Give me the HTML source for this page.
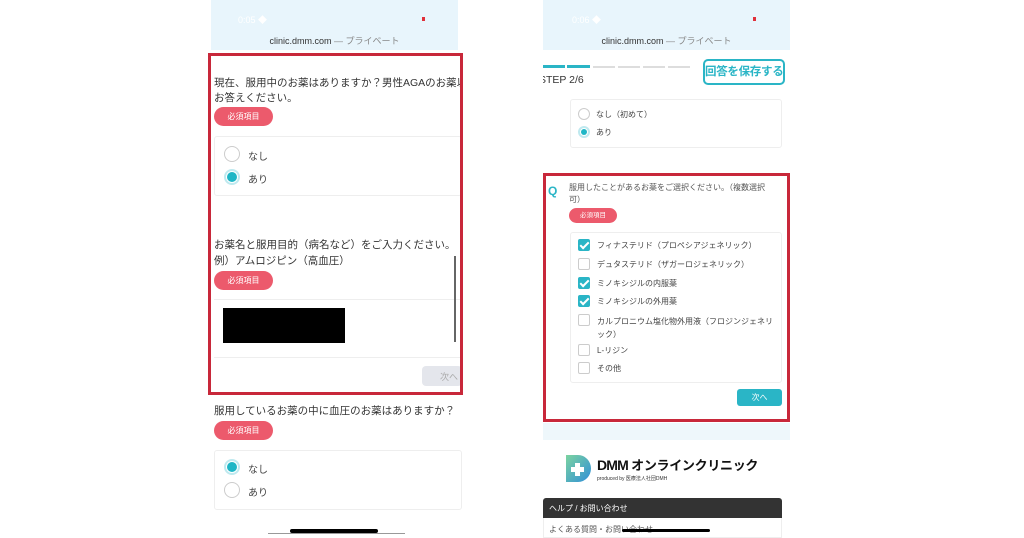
<!DOCTYPE html>
<html><head><meta charset="utf-8"><style>
*{margin:0;padding:0;box-sizing:border-box}
body{width:1024px;height:538px;background:#fff;position:relative;overflow:hidden;font-family:"Liberation Sans","Noto Sans CJK JP",sans-serif;color:#444}
.a{position:absolute}
.pill{position:absolute;background:#ec5a6c;color:#fff;border-radius:10px;text-align:center}
.rad{position:absolute;border:1px solid #ccc;border-radius:50%;background:#fff}
.rad.on{border:2px solid #bfe9ef}
.rad.on::after{content:"";position:absolute;left:1px;top:1px;right:1px;bottom:1px;border-radius:50%;background:#1fb6c6}
.box{position:absolute;border:1px solid #eee;border-radius:3px;background:#fff}
.cb{position:absolute;width:12px;height:12px;border:1px solid #ccc;border-radius:2px;background:#fff}
.cb.on{background:#2ab5c6;border-color:#2ab5c6}
.cb.on::after{content:"";position:absolute;left:3px;top:0px;width:3px;height:7px;border:solid #fff;border-width:0 2px 2px 0;transform:rotate(45deg)}
.t{position:absolute;white-space:nowrap}
</style></head><body>
<!-- LEFT PHONE -->
<div class="a" style="left:211px;top:0;width:247px;height:50px;background:#e8f5fc"></div>
<div class="t" style="left:211px;width:247px;text-align:center;top:34px;font-size:9px;color:#333">clinic.dmm.com <span style="color:#888">— プライベート</span></div>
<div class="t" style="left:238px;top:13px;font-size:9px;color:#fff">0:05 ◆</div>
<div class="a" style="left:422px;top:17px;width:3px;height:4px;background:#e0303a"></div>

<div class="a" style="left:214px;top:76px;width:246px;height:32px;overflow:hidden"><div class="t" style="left:0;top:0;font-size:10.5px;line-height:15px;color:#333">現在、服用中のお薬はありますか？男性AGAのお薬以外<br>お答えください。</div></div>
<div class="pill" style="left:214px;top:107px;width:59px;height:19px;font-size:8px;line-height:19px">必須項目</div>
<div class="box" style="left:214px;top:136px;width:248px;height:60px"></div>
<div class="rad" style="left:224px;top:146px;width:16px;height:16px"></div>
<div class="t" style="left:248px;top:148px;font-size:10px">なし</div>
<div class="rad on" style="left:224px;top:169px;width:16px;height:16px"></div>
<div class="t" style="left:248px;top:171px;font-size:10px">あり</div>

<div class="t" style="left:214px;top:238px;font-size:10.5px;line-height:15.5px;color:#333">お薬名と服用目的（病名など）をご入力ください。<br>例）アムロジピン（高血圧）</div>
<div class="pill" style="left:214px;top:271px;width:59px;height:19px;font-size:8px;line-height:19px">必須項目</div>
<div class="a" style="left:214px;top:299px;width:248px;height:1px;background:#eee"></div>
<div class="a" style="left:223px;top:308px;width:122px;height:35px;background:#000"></div>
<div class="a" style="left:214px;top:357px;width:248px;height:1px;background:#eee"></div>
<div class="a" style="left:422px;top:366px;width:40px;height:20px;background:#e4e6ec;border-radius:4px"></div>
<div class="t" style="left:440px;top:370px;font-size:9px;color:#aaa">次へ</div>
<div class="a" style="left:454px;top:256px;width:2px;height:86px;background:#666"></div>
<div class="a" style="left:208px;top:53px;width:255px;height:342px;border:3px solid #c8283a"></div>

<div class="t" style="left:214px;top:403px;font-size:10.5px;color:#333">服用しているお薬の中に血圧のお薬はありますか？</div>
<div class="pill" style="left:214px;top:421px;width:59px;height:19px;font-size:8px;line-height:19px">必須項目</div>
<div class="box" style="left:214px;top:450px;width:248px;height:60px"></div>
<div class="rad on" style="left:224px;top:459px;width:16px;height:16px"></div>
<div class="t" style="left:248px;top:461px;font-size:10px">なし</div>
<div class="rad" style="left:224px;top:482px;width:16px;height:16px"></div>
<div class="t" style="left:248px;top:484px;font-size:10px">あり</div>
<div class="a" style="left:268px;top:533px;width:137px;height:1px;background:#999"></div>
<div class="a" style="left:290px;top:529px;width:88px;height:4px;background:#000;border-radius:2px"></div>

<!-- RIGHT PHONE -->
<div class="a" style="left:543px;top:0;width:247px;height:50px;background:#e8f5fc"></div>
<div class="t" style="left:543px;width:247px;text-align:center;top:34px;font-size:9px;color:#333">clinic.dmm.com <span style="color:#888">— プライベート</span></div>
<div class="t" style="left:572px;top:13px;font-size:9px;color:#fff">0:06 ◆</div>
<div class="a" style="left:753px;top:17px;width:3px;height:4px;background:#e0303a"></div>

<div class="a" style="left:543px;top:65px;width:22px;height:3px;background:#2ab5c6"></div>
<div class="a" style="left:567px;top:65px;width:23px;height:3px;background:#2ab5c6"></div>
<div class="a" style="left:593px;top:66px;width:22px;height:2px;background:#ddd"></div>
<div class="a" style="left:618px;top:66px;width:22px;height:2px;background:#ddd"></div>
<div class="a" style="left:643px;top:66px;width:22px;height:2px;background:#ddd"></div>
<div class="a" style="left:668px;top:66px;width:22px;height:2px;background:#ddd"></div>
<div class="a" style="left:543px;top:74px;width:60px;height:16px;overflow:hidden"><div class="t" style="left:-4px;top:0;font-size:10.5px;color:#333">STEP 2/6</div></div>
<div class="a" style="left:703px;top:59px;width:82px;height:26px;border:2px solid #2ab5c6;border-radius:5px;color:#2ab5c6;font-weight:bold;font-size:11.5px;text-align:center;line-height:22px;white-space:nowrap;letter-spacing:-0.3px">回答を保存する</div>

<div class="box" style="left:570px;top:99px;width:212px;height:49px"></div>
<div class="rad" style="left:578px;top:108px;width:12px;height:12px"></div>
<div class="t" style="left:596px;top:109px;font-size:8px">なし（初めて）</div>
<div class="rad on" style="left:578px;top:126px;width:12px;height:12px"></div>
<div class="t" style="left:596px;top:127px;font-size:8px">あり</div>

<div class="t" style="left:548px;top:184px;font-size:12px;color:#2ab5c6;font-weight:bold">Q</div>
<div class="t" style="left:569px;top:182px;font-size:8px;line-height:12px;color:#555">服用したことがあるお薬をご選択ください。（複数選択<br>可）</div>
<div class="pill" style="left:569px;top:208px;width:48px;height:15px;font-size:6.5px;line-height:15px">必須項目</div>
<div class="box" style="left:570px;top:232px;width:212px;height:151px"></div>
<div class="cb on" style="left:578px;top:239px"></div><div class="t" style="left:597px;top:240px;font-size:8px">フィナステリド（プロペシアジェネリック）</div>
<div class="cb" style="left:578px;top:258px"></div><div class="t" style="left:597px;top:259px;font-size:8px">デュタステリド（ザガーロジェネリック）</div>
<div class="cb on" style="left:578px;top:277px"></div><div class="t" style="left:597px;top:278px;font-size:8px">ミノキシジルの内服薬</div>
<div class="cb on" style="left:578px;top:295px"></div><div class="t" style="left:597px;top:296px;font-size:8px">ミノキシジルの外用薬</div>
<div class="cb" style="left:578px;top:314px"></div><div class="t" style="left:597px;top:315px;font-size:8px;line-height:13px">カルプロニウム塩化物外用液（フロジンジェネリ<br>ック）</div>
<div class="cb" style="left:578px;top:344px"></div><div class="t" style="left:597px;top:345px;font-size:8px">L-リジン</div>
<div class="cb" style="left:578px;top:362px"></div><div class="t" style="left:597px;top:363px;font-size:8px">その他</div>
<div class="a" style="left:737px;top:389px;width:45px;height:17px;background:#2ab5c6;border-radius:3px;color:#fff;font-size:8px;text-align:center;line-height:17px">次へ</div>
<div class="a" style="left:543px;top:173px;width:247px;height:249px;border:3px solid #c8283a"></div>
<div class="a" style="left:543px;top:423px;width:247px;height:17px;background:#eef7fb"></div>

<svg class="a" style="left:566px;top:455px" width="26" height="27" viewBox="0 0 26 27"><defs><linearGradient id="g" x1="0" y1="0" x2="1" y2="1"><stop offset="0" stop-color="#7cd3a0"/><stop offset="1" stop-color="#2f8fd8"/></linearGradient></defs><path d="M0 0H12A13 13.5 0 0 1 12 27H0Z" fill="url(#g)"/><path d="M9 8h5v4h4v5h-4v4h-5v-4h-4v-5h4z" fill="#fff"/></svg>
<div class="t" style="left:597px;top:455px;font-size:14px;font-weight:bold;color:#111;letter-spacing:-0.8px">DMM <span style="font-size:13px;letter-spacing:-0.3px">オンラインクリニック</span></div>
<div class="t" style="left:597px;top:475px;font-size:5px;color:#333">produced by 医療法人社団DMH</div>
<div class="a" style="left:543px;top:498px;width:239px;height:20px;background:#333;border-radius:3px 3px 0 0"></div>
<div class="t" style="left:549px;top:503px;font-size:8px;color:#fff">ヘルプ / お問い合わせ</div>
<div class="a" style="left:543px;top:518px;width:239px;height:20px;border:1px solid #eee;border-top:none"></div>
<div class="t" style="left:549px;top:524px;font-size:8px;color:#555">よくある質問・お問い合わせ</div>
<div class="a" style="left:622px;top:529px;width:88px;height:3px;background:#000;border-radius:2px"></div>
</body></html>
